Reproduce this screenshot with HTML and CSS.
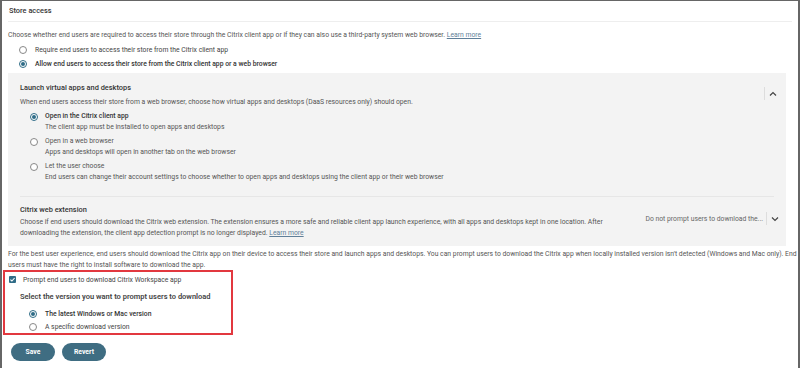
FILE: index.html
```html
<!DOCTYPE html>
<html lang="en">

<head>
    <meta charset="UTF-8">
    <meta name="viewport" content="width=device-width, initial-scale=1.0">
    <title>Store access</title>
    <link rel="stylesheet" href="styles.css">
</head>

<body>
    <div class="frame">
        <div class="page">
            <div class="section-head">Store access</div>
            <p class="desc intro">Choose whether end users are required to access their store through the Citrix client app or if they can also use a third-party system web browser. <a href="#">Learn more</a></p>

            <div class="radio-list top">
                <label class="radio-row"><span class="radio"></span>Require end users to access their store from the Citrix client app</label>
                <label class="radio-row strong"><span class="radio checked"></span>Allow end users to access their store from the Citrix client app or a web browser</label>
            </div>

            <div class="panel">
                <div class="panel-block launch">
                    <div class="panel-main">
                        <div class="panel-title">Launch virtual apps and desktops</div>
                        <p class="desc">When end users access their store from a web browser, choose how virtual apps and desktops (DaaS resources only) should open.</p>
                        <div class="option-list">
                            <div class="option">
                                <span class="radio checked"></span>
                                <div>
                                    <div class="option-title strong">Open in the Citrix client app</div>
                                    <div class="option-sub">The client app must be installed to open apps and desktops</div>
                                </div>
                            </div>
                            <div class="option">
                                <span class="radio"></span>
                                <div>
                                    <div class="option-title">Open in a web browser</div>
                                    <div class="option-sub">Apps and desktops will open in another tab on the web browser</div>
                                </div>
                            </div>
                            <div class="option">
                                <span class="radio"></span>
                                <div>
                                    <div class="option-title">Let the user choose</div>
                                    <div class="option-sub">End users can change their account settings to choose whether to open apps and desktops using the client app or their web browser</div>
                                </div>
                            </div>
                        </div>
                    </div>
                    <div class="toggle">
                        <svg width="8" height="6" viewBox="0 0 8 6"><path d="M1 4.5 L4 1.5 L7 4.5" fill="none" stroke="#444" stroke-width="1.2"/></svg>
                    </div>
                </div>

                <div class="panel-block ext">
                    <div class="panel-main">
                        <div class="panel-title">Citrix web extension</div>
                        <p class="desc ext-desc">Choose if end users should download the Citrix web extension. The extension ensures a more safe and reliable client app launch experience, with all apps and desktops kept in one location. After downloading the extension, the client app detection prompt is no longer displayed. <a href="#">Learn more</a></p>
                    </div>
                    <div class="select">
                        <span class="select-value">Do not prompt users to download the...</span>
                        <span class="toggle">
                            <svg width="8" height="6" viewBox="0 0 8 6"><path d="M1 1.5 L4 4.5 L7 1.5" fill="none" stroke="#444" stroke-width="1.2"/></svg>
                        </span>
                    </div>
                </div>
            </div>

            <p class="desc para">For the best user experience, end users should download the Citrix app on their device to access their store and launch apps and desktops. You can prompt users to download the Citrix app when locally installed version isn't detected (Windows and Mac only). End users must have the right to install software to download the app.</p>

            <div class="highlight">
                <label class="check-row">
                    <span class="checkbox">
                        <svg width="7" height="7" viewBox="0 0 7 7"><path d="M1.4 3.6 L2.9 5 L5.6 2" fill="none" stroke="#fff" stroke-width="1.1"/></svg>
                    </span>
                    Prompt end users to download Citrix Workspace app
                </label>
                <div class="sub-title">Select the version you want to prompt users to download</div>
                <div class="radio-list version">
                    <label class="radio-row strong"><span class="radio checked"></span>The latest Windows or Mac version</label>
                    <label class="radio-row"><span class="radio"></span>A specific download version</label>
                </div>
            </div>

            <div class="actions">
                <button class="btn">Save</button>
                <button class="btn">Revert</button>
            </div>
        </div>
    </div>
</body>

</html>
```

FILE: styles.css
```css
body {
    margin: 0;
    padding: 0;
    font-family: 'Roboto', 'Liberation Sans', sans-serif;
    font-size: 6.8px;
    color: #555;
    background-color: #fff;
}

.frame {
    height: 368px;
    box-sizing: border-box;
    border-top: 1px solid #666;
    border-left: 2px solid #666;
    border-right: 2px solid #666;
    overflow: hidden;
}

.page {
    padding: 0 6px 0 6px;
}

p {
    margin: 0;
}

a {
    color: #5f7f99;
    text-decoration: underline;
}

.section-head {
    height: 20px;
    line-height: 19px;
    padding-left: 1px;
    font-size: 7.4px;
    font-weight: 500;
    color: #333;
    border-bottom: 1px solid #eee;
}

.desc {
    line-height: 11px;
    color: #555;
}

.intro {
    margin-top: 8px;
}

.radio-list {
    display: flex;
    flex-direction: column;
}

.radio-list.top {
    margin-top: 2px;
    padding-left: 11px;
}

.radio-row {
    display: flex;
    align-items: center;
    height: 14px;
    color: #444;
}

.strong {
    font-weight: 500;
    color: #333;
}

.radio {
    width: 8px;
    height: 8px;
    border: 1px solid #888;
    border-radius: 50%;
    background-color: #fff;
    box-sizing: border-box;
    margin-right: 8px;
    flex-shrink: 0;
    position: relative;
}

.radio.checked {
    border-color: #2f6c87;
}

.radio.checked::after {
    content: "";
    position: absolute;
    left: 1px;
    top: 1px;
    width: 4px;
    height: 4px;
    border-radius: 50%;
    background-color: #2f6c87;
}

.panel {
    margin-top: 2px;
    margin-right: 6px;
    background-color: #f3f3f3;
    padding: 0 12px;
}

.panel-block {
    display: flex;
    align-items: flex-start;
}

.panel-block.launch {
    padding-top: 9px;
    padding-bottom: 13px;
    border-bottom: 1px solid #e6e6e6;
}

.panel-block.ext {
    padding-top: 7px;
    padding-bottom: 7px;
}

.panel-main {
    flex: 1;
}

.panel-title {
    line-height: 12px;
    font-size: 7.4px;
    font-weight: 500;
    color: #333;
    margin-bottom: 3px;
}

.ext .panel-title {
    margin-bottom: 1px;
}

.option-list {
    display: flex;
    flex-direction: column;
    gap: 3px;
    margin-top: 3px;
    padding-left: 10px;
}

.option {
    display: flex;
    align-items: flex-start;
}

.option .radio {
    margin-top: 1.5px;
    margin-right: 7px;
}

.option-title,
.option-sub {
    line-height: 11px;
}

.toggle {
    display: flex;
    align-items: center;
    justify-content: center;
    width: 12px;
    height: 13px;
    border-left: 1px solid #ddd;
    padding-left: 2px;
}

.launch .toggle {
    margin-top: 5px;
    margin-right: -5px;
}

.ext-desc {
    max-width: 592px;
}

.select {
    display: flex;
    align-items: center;
    margin-top: 8px;
    margin-right: -7px;
    gap: 3px;
}

.select-value {
    color: #666;
}

.para {
    margin-top: 3px;
    line-height: 10.5px;
    margin-right: -6px;
}

.highlight {
    margin-left: -5px;
    width: 230px;
    height: 65px;
    box-sizing: border-box;
    border: 2px solid #e2383f;
    padding: 1px 0 0 4px;
}

.check-row {
    display: flex;
    align-items: center;
    height: 13px;
    color: #444;
}

.checkbox {
    display: flex;
    align-items: center;
    justify-content: center;
    width: 7px;
    height: 7px;
    border-radius: 1px;
    background-color: #2f6c87;
    margin-right: 7px;
}

.sub-title {
    margin-top: 5px;
    padding-left: 11px;
    line-height: 11px;
    font-size: 7.5px;
    font-weight: 600;
    color: #444;
}

.radio-list.version {
    margin-top: 5px;
    padding-left: 20px;
}

.radio-list.version .radio-row {
    height: 13px;
}

.actions {
    display: flex;
    gap: 7px;
    margin-top: 8px;
    padding-left: 3px;
}

.btn {
    width: 44px;
    height: 18px;
    border: none;
    border-radius: 9px;
    background-color: #3f6d82;
    color: #fff;
    font-family: 'Roboto', 'Liberation Sans', sans-serif;
    font-size: 6.8px;
    font-weight: 700;
    padding: 0;
    cursor: pointer;
}
```
